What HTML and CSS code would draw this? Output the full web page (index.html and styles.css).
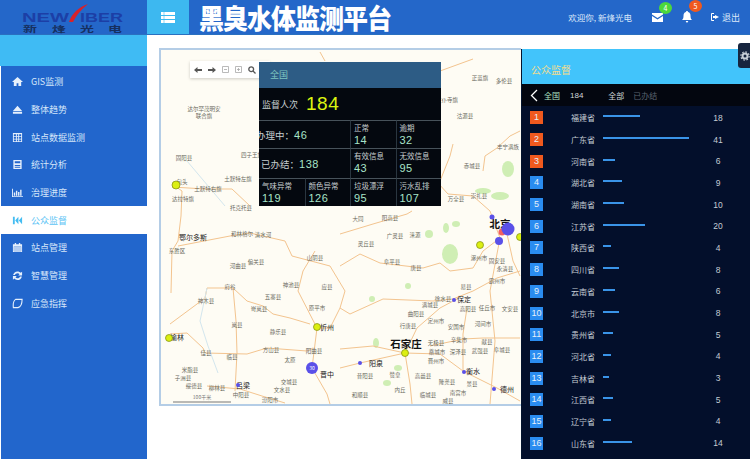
FILE: index.html
```html
<!DOCTYPE html>
<html lang="zh-CN">
<head>
  <meta charset="UTF-8">
  <title>黑臭水体监测平台</title>
  <link rel="stylesheet" href="styles.css">
</head>
<body>

  <header class="topbar">
    <div class="logo">
      <svg width="147" height="34" viewBox="0 0 147 34">
        <text class="logo-en" x="22" y="21.500" textLength="47" lengthAdjust="spacingAndGlyphs">NEW</text>
        <text class="logo-en" x="80" y="21.500" textLength="43" lengthAdjust="spacingAndGlyphs">IBER</text>
        <path d="M69 22 C72 13 79 7 88 4 C82 9 77 14 73 22 Z" fill="#d8222a"/>
        <text class="logo-cn" x="23" y="31.500" textLength="14" lengthAdjust="spacingAndGlyphs">新</text>
        <text class="logo-cn" x="52" y="31.500" textLength="14" lengthAdjust="spacingAndGlyphs">烽</text>
        <text class="logo-cn" x="80" y="31.500" textLength="14" lengthAdjust="spacingAndGlyphs">光</text>
        <text class="logo-cn" x="108" y="31.500" textLength="14" lengthAdjust="spacingAndGlyphs">电</text>
      </svg>
    </div>
    <div class="toggle">
      <svg width="14" height="11" viewBox="0 0 14 11"><path d="M0 0h14v3H0zM0 4h14v3H0zM0 8h14v3H0z" fill="#fff"/><path d="M3 0v11" stroke="#3db8f0" stroke-width=".6"/></svg>
    </div>
    <div class="site-title">黑臭水体监测平台</div>
    <div class="top-right">
      <span class="welcome">欢迎你, 新烽光电</span>
      <span class="top-icon">
        <svg width="11" height="9" viewBox="0 0 11 9"><path d="M0 0h11v1.500L5.500 5 0 1.500zM0 3l5.500 3.500L11 3v6H0z" fill="#fff"/></svg>
        <i class="badge badge-green">4</i>
      </span>
      <span class="top-icon">
        <svg width="10" height="12" viewBox="0 0 10 12"><path d="M5 0c.6 0 1 .4 1 1 2 .5 2.500 2 2.500 4 0 2 .5 3 1.500 4H0c1-1 1.500-2 1.500-4 0-2 .5-3.500 2.500-4 0-.6.4-1 1-1zM3.800 10h2.400c0 .8-.5 1.500-1.200 1.500S3.800 10.800 3.800 10z" fill="#fff"/></svg>
        <i class="badge badge-orange">5</i>
      </span>
      <span class="logout">
        <svg width="8" height="8" viewBox="0 0 8 8"><path d="M3 0H1a1 1 0 0 0-1 1v6a1 1 0 0 0 1 1h2V7H1V1h2zM4 2v1H2v2h2v1l4-2z" fill="#fff"/></svg>
        退出
      </span>
    </div>
  </header>

  <div class="layout">
    <aside class="sidebar">
      <div class="side-top"></div>
      <ul class="menu">
        <li><svg class="ico" viewBox="0 0 12 12"><path d="M6 1 0 6.500h2V11h3V8h2v3h3V6.500h2z"/></svg>GIS监测</li>
        <li><svg class="ico" viewBox="0 0 12 12"><path d="M6 2 11 7.500H1zM1 8.500h10V10.500H1z"/></svg>整体趋势</li>
        <li><svg class="ico" viewBox="0 0 12 12"><path d="M1 1h10v10H1zM2 2.500V4.500h2.300v-2zm3.300 0V4.500h1.500v-2zm2.500 0V4.500H10v-2zM2 5.500V7.300h2.300V5.500zm3.300 0V7.300h1.500V5.500zm2.500 0V7.300H10V5.500zM2 8.300V10h2.300V8.300zm3.300 0V10h1.500V8.300zm2.500 0V10H10V8.300z"/></svg>站点数据监测</li>
        <li><svg class="ico" viewBox="0 0 12 12"><path d="M1.500 1h9v10h-9zM3 2.500v2h6v-2zm0 4V7.500h6V6.500zm0 2V9.500h6V8.500z" fill-rule="evenodd"/></svg>统计分析</li>
        <li><svg class="ico" viewBox="0 0 12 12"><path d="M0 2h1v8h11v1H0zM2 6h1.500v3.500H2zM4.300 4h1.500v5.500H4.300zM6.600 5.500h1.500v4H6.600zM8.900 3h1.500v6.500H8.900z"/></svg>治理进度</li>
        <li class="active"><svg class="ico" viewBox="0 0 12 12"><path d="M1 2h2v8H1zM3.500 6 7 2v8zM7.500 6 11 2v8z"/></svg>公众监督</li>
        <li><svg class="ico" viewBox="0 0 12 12"><path d="M3 1h1.500v1.500h3V1H9v1.500h2V11H1V2.500h2zM2 5v5h8V5z" fill-rule="evenodd"/><path d="M2 5h8v5H2z" opacity=".75"/></svg>站点管理</li>
        <li><svg class="ico" viewBox="0 0 12 12"><path d="M6 1.500c1.500 0 2.700.6 3.500 1.600L11 1.800V6H6.800l1.400-1.500C7.700 3.800 7 3.500 6 3.500 4.700 3.500 3.600 4.300 3.200 5.500H1.200C1.700 3.200 3.700 1.500 6 1.500zM1 6.500h4.200L3.800 8c.5.600 1.200 1 2.200 1 1.300 0 2.400-.8 2.800-2h2c-.5 2.300-2.500 4-4.800 4-1.500 0-2.700-.6-3.500-1.600L1 10.700z"/></svg>智慧管理</li>
        <li><svg class="ico ico-line" viewBox="0 0 12 12"><path d="M4 1.500h7c0 4-1 8-4.500 9H1.500C1 6.500 1.500 3 4 1.500z"/></svg>应急指挥</li>
      </ul>
    </aside>

    <main class="content">
      <section class="map">
        <svg class="map-canvas" viewBox="161 49 360 354" width="360" height="354">
          <g class="green">
            <ellipse cx="450" cy="253" rx="8" ry="10"/><ellipse cx="429" cy="233" rx="4" ry="4"/>
            <ellipse cx="446" cy="227" rx="3" ry="5"/><ellipse cx="456" cy="223" rx="4" ry="3"/>
            <ellipse cx="508" cy="168" rx="6" ry="8"/><ellipse cx="483" cy="190" rx="8" ry="3"/>
            <ellipse cx="500" cy="195" rx="9" ry="4"/><ellipse cx="376" cy="342" rx="3" ry="5"/>
            <ellipse cx="398" cy="367" rx="4" ry="3"/><ellipse cx="387" cy="382" rx="4" ry="3"/>
            <ellipse cx="372" cy="298" rx="3" ry="3"/><ellipse cx="408" cy="285" rx="3" ry="3"/>
          </g>
          <g class="roads">
            <path d="M172 183 182 190 181 215 178 240 172 250 171 292"/>
            <path d="M172 186 205 188 232 188 250 205"/>
            <path d="M178 245 230 235 250 232 285 240 292 255 330 265"/>
            <path d="M170 323 197 303 205 297 207 287 233 287 247 300 263 305 273 313 290 317 310 323"/>
            <path d="M170 333 187 332 203 347 205 352 247 353 267 347 307 350 313 347"/>
            <path d="M317 327 312 367 327 393 330 403"/>
            <path d="M233 287 236 320 237 352 235 390"/>
            <path d="M207 385 240 388 262 395 285 402"/>
            <path d="M315 250 303 270 298 290 317 327"/>
            <path d="M340 233 373 223 407 213 412 210"/>
            <path d="M340 265 360 253 380 262 423 267 440 262 450 270 473 267 483 250 500 237"/>
            <path d="M507 233 513 260 520 275"/>
            <path d="M340 307 350 313 383 298 433 300 453 298 473 290 497 277 520 270"/>
            <path d="M340 348 373 345 405 352 440 353 463 370 497 387 520 400"/>
            <path d="M405 352 417 327 440 307 457 298"/>
            <path d="M405 352 410 383 412 403"/>
            <path d="M405 352 360 362 340 367"/>
            <path d="M463 370 463 333 467 307"/>
            <path d="M520 337 483 337 463 338 430 345"/>
            <path d="M330 265 345 290 340 307 330 327 317 327"/>
            <path d="M440 70 473 58"/><path d="M453 143 450 155 440 180"/>
            <path d="M438 182 448 193 473 195 490 210 500 237"/>
            <path d="M520 130 510 135 497 147 485 155 483 170"/>
            <path d="M320 51 325 60"/>
            <path d="M500 237 490 290 495 340 490 403"/>
          </g>
          <path class="river" d="M207 287 200 320 208 345 218 372"/>
          <path class="river" d="M187 160 225 205"/>
          <g class="place">
            <text x="204" y="110">达尔罕茂明安</text><text x="204" y="117">联合旗</text>
            <text x="184" y="159">固阳县</text><text x="182" y="183">包头</text>
            <text x="208" y="190">土默特右旗</text><text x="238" y="180">土默特左旗</text>
            <text x="183" y="200">达拉特旗</text><text x="241" y="209">托克托县</text>
            <text x="242" y="235">和林格尔</text><text x="177" y="252">东胜区</text>
            <text x="238" y="267">河曲县</text><text x="256" y="263">偏关县</text>
            <text x="263" y="236">清水河</text><text x="206" y="302">神木县</text>
            <text x="230" y="288">府谷</text><text x="291" y="286">神池县</text>
            <text x="273" y="298">五寨县</text><text x="259" y="310">岢岚县</text>
            <text x="278" y="333">静乐县</text><text x="237" y="326">岚县</text>
            <text x="271" y="351">方山县</text><text x="290" y="361">太原</text>
            <text x="289" y="383">交城县</text><text x="282" y="391">文水县</text>
            <text x="314" y="352">阳曲县</text><text x="317" y="309">原平市</text>
            <text x="315" y="259">山阴县</text><text x="327" y="288">应县</text>
            <text x="190" y="371">米脂县</text><text x="183" y="379">子洲县</text>
            <text x="194" y="387">绥德县</text><text x="206" y="354">佳县</text>
            <text x="232" y="358">临县</text><text x="217" y="389">柳林县</text>
            <text x="241" y="396">中阳县</text><text x="270" y="401">汾阳市</text>
            <text x="252" y="156">四子王旗</text>
            <text x="480" y="79">正蓝旗</text><text x="504" y="82">多伦县</text>
            <text x="447" y="101">太仆寺旗</text><text x="465" y="117">沽源县</text>
            <text x="508" y="148">丰宁满族</text><text x="472" y="167">赤城县</text>
            <text x="456" y="200">万全县</text><text x="479" y="197">崇礼县</text>
            <text x="390" y="219">阳高县</text><text x="358" y="220">大同</text>
            <text x="395" y="237">广灵县</text><text x="415" y="236">涞源</text>
            <text x="366" y="245">灵丘县</text><text x="392" y="263">阜平县</text>
            <text x="416" y="269">唐县</text><text x="479" y="259">涿州市</text>
            <text x="497" y="262">固安县</text><text x="505" y="270">永清县</text>
            <text x="466" y="288">易县</text><text x="497" y="282">霸州市</text>
            <text x="443" y="300">徐水县</text><text x="430" y="306">满城县</text>
            <text x="468" y="310">高阳县</text><text x="487" y="309">任丘市</text>
            <text x="510" y="310">文安县</text><text x="416" y="315">曲阳县</text>
            <text x="436" y="322">定州市</text><text x="408" y="327">行唐县</text>
            <text x="456" y="328">安国市</text><text x="483" y="325">河间市</text>
            <text x="459" y="341">辛集市</text><text x="436" y="344">无极县</text>
            <text x="487" y="343">献县</text><text x="437" y="353">藁城市</text>
            <text x="458" y="353">深泽县</text><text x="436" y="362">晋州市</text>
            <text x="480" y="352">武强县</text><text x="502" y="351">阜城县</text>
            <text x="395" y="376">赞皇</text><text x="423" y="377">高邑县</text>
            <text x="447" y="383">隆尧县</text>
            <text x="472" y="385">景县</text><text x="400" y="391">内丘</text>
            <text x="428" y="396">临城县</text><text x="458" y="394">南宫市</text>
            <text x="365" y="377">昔阳县</text><text x="360" y="396">和顺县</text>
            <text x="448" y="402">威县</text>
          </g>
          <g class="place place-bold">
            <text x="193" y="239">鄂尔多斯</text><text x="177" y="339">榆林</text>
            <text x="327" y="329">忻州</text><text x="327" y="376">晋中</text>
            <text x="243" y="387">吕梁</text><text x="376" y="365">阳泉</text>
            <text x="464" y="301">保定</text><text x="473" y="373">衡水</text>
            <text x="507" y="391">德州</text>
          </g>
          <g class="place place-city">
            <text x="500" y="227">北京</text>
            <text x="406" y="347">石家庄</text>
          </g>
          <g class="mark-yellow">
            <circle cx="176" cy="184" r="4"/><circle cx="317" cy="326" r="3.500"/>
            <circle cx="169" cy="337" r="3.500"/><circle cx="480" cy="244" r="3.500"/>
            <circle cx="520" cy="236" r="3.500"/><circle cx="405" cy="352" r="3.500"/>
          </g>
          <circle class="mark-red" cx="502" cy="231" r="3.500"/>
          <g class="mark-blue">
            <circle cx="508" cy="228" r="6.500"/><circle cx="499" cy="240" r="4"/>
            <circle cx="492" cy="216" r="2.500"/><circle cx="454" cy="299" r="2"/>
            <circle cx="360" cy="362" r="2"/><circle cx="464" cy="371" r="2"/>
            <circle cx="494" cy="388" r="2"/><circle cx="312" cy="367" r="6"/>
            <circle cx="238" cy="384" r="2"/>
          </g>
          <text class="mark-num" x="312" y="369">30</text>
          <path class="scale" d="M173 401H231"/>
          <text class="scale-text" x="202" y="398">100千米</text>
        </svg>

        <div class="map-tools">
          <svg width="8" height="6" viewBox="0 0 8 6"><path d="M0 3 3.500 0v2H8v2H3.500v2z"/></svg>
          <svg width="8" height="6" viewBox="0 0 8 6"><path d="M8 3 4.500 0v2H0v2h4.500v2z"/></svg>
          <svg class="tool-box" width="7" height="7" viewBox="0 0 7 7"><path d="M.5.500h6v6h-6zM2 3.500h3"/></svg>
          <svg class="tool-box" width="7" height="7" viewBox="0 0 7 7"><path d="M.5.500h6v6h-6zM2 3.500h3M3.500 2v3"/></svg>
          <svg class="tool-search" width="8" height="8" viewBox="0 0 8 8"><circle cx="3.200" cy="3.200" r="2.400"/><path d="M5 5 7.500 7.500"/></svg>
        </div>

        <div class="stats">
          <div class="stats-head">全国</div>
          <div class="stats-total"><span>监督人次</span><b>184</b></div>
          <div class="stats-grid">
            <div class="cell cell-wide"><span class="inline-label first">办理中：</span><em>46</em></div>
            <div class="cell"><label>正常</label><em>14</em></div>
            <div class="cell"><label>逾期</label><em>32</em></div>
            <div class="cell cell-wide"><span class="inline-label">已办结：</span><em>138</em></div>
            <div class="cell"><label>有效信息</label><em>43</em></div>
            <div class="cell"><label>无效信息</label><em>95</em></div>
            <div class="cell"><label>气味异常</label><em>119</em></div>
            <div class="cell"><label>颜色异常</label><em>126</em></div>
            <div class="cell"><label>垃圾漂浮</label><em>95</em></div>
            <div class="cell"><label>污水乱排</label><em>107</em></div>
          </div>
        </div>
      </section>

      <section class="panel">
        <div class="panel-head">公众监督</div>
        <div class="panel-nav">
          <svg width="8" height="13" viewBox="0 0 8 13"><path d="M7 1 1.500 6.500 7 12" fill="none" stroke="#fff" stroke-width="1.300"/></svg>
          <span class="nav-area">全国</span>
          <span class="nav-count">184</span>
          <span class="nav-all">全部</span>
          <span class="nav-done">已办结</span>
        </div>
        <ul class="rank">
          <li><i class="no hot">1</i><span class="name">福建省</span><span class="bar-wrap"><span class="bar" style="width:37px"></span></span><span class="num">18</span></li>
          <li><i class="no hot">2</i><span class="name">广东省</span><span class="bar-wrap"><span class="bar" style="width:86px"></span></span><span class="num">41</span></li>
          <li><i class="no hot">3</i><span class="name">河南省</span><span class="bar-wrap"><span class="bar" style="width:12px"></span></span><span class="num">6</span></li>
          <li><i class="no">4</i><span class="name">湖北省</span><span class="bar-wrap"><span class="bar" style="width:19px"></span></span><span class="num">9</span></li>
          <li><i class="no">5</i><span class="name">湖南省</span><span class="bar-wrap"><span class="bar" style="width:21px"></span></span><span class="num">10</span></li>
          <li><i class="no">6</i><span class="name">江苏省</span><span class="bar-wrap"><span class="bar" style="width:42px"></span></span><span class="num">20</span></li>
          <li><i class="no">7</i><span class="name">陕西省</span><span class="bar-wrap"><span class="bar" style="width:8px"></span></span><span class="num">4</span></li>
          <li><i class="no">8</i><span class="name">四川省</span><span class="bar-wrap"><span class="bar" style="width:16px"></span></span><span class="num">8</span></li>
          <li><i class="no">9</i><span class="name">云南省</span><span class="bar-wrap"><span class="bar" style="width:12px"></span></span><span class="num">6</span></li>
          <li><i class="no">10</i><span class="name">北京市</span><span class="bar-wrap"><span class="bar" style="width:16px"></span></span><span class="num">8</span></li>
          <li><i class="no">11</i><span class="name">贵州省</span><span class="bar-wrap"><span class="bar" style="width:10px"></span></span><span class="num">5</span></li>
          <li><i class="no">12</i><span class="name">河北省</span><span class="bar-wrap"><span class="bar" style="width:8px"></span></span><span class="num">4</span></li>
          <li><i class="no">13</i><span class="name">吉林省</span><span class="bar-wrap"><span class="bar" style="width:6px"></span></span><span class="num">3</span></li>
          <li><i class="no">14</i><span class="name">江西省</span><span class="bar-wrap"><span class="bar" style="width:10px"></span></span><span class="num">5</span></li>
          <li><i class="no">15</i><span class="name">辽宁省</span><span class="bar-wrap"><span class="bar" style="width:8px"></span></span><span class="num">4</span></li>
          <li><i class="no">16</i><span class="name">山东省</span><span class="bar-wrap"><span class="bar" style="width:29px"></span></span><span class="num">14</span></li>
        </ul>
      </section>

      <div class="gear">
        <svg width="12" height="12" viewBox="0 0 12 12"><circle cx="6" cy="6" r="3" fill="none" stroke="#c8d0d8" stroke-width="2.400"/><circle cx="6" cy="6" r="5" fill="none" stroke="#c8d0d8" stroke-width="1.400" stroke-dasharray="2 1.900"/></svg>
      </div>
    </main>
  </div>

</body>
</html>
```

FILE: styles.css
```css
* {
  box-sizing: border-box;
}

html,
body {
  height: 100%;
}

body {
  margin: 0;
  overflow: hidden;
  background-color: #fff;
  font-family: "Noto Sans CJK SC", "Liberation Sans", sans-serif;
  font-size: 9px;
}

ul {
  list-style: none;
  margin: 0;
  padding: 0;
}

/* top bar */
.topbar {
  display: flex;
  align-items: stretch;
  height: 35px;
  background-color: #2467c9;
  border-bottom: 1px solid #2a70c0;
}

.logo {
  width: 147px;
  flex: none;
}

.logo svg {
  display: block;
}

.logo-en {
  font-family: "Liberation Sans", sans-serif;
  font-size: 12px;
  font-weight: bold;
  fill: #1c3fa6;
}

.logo-cn {
  font-size: 8.500px;
  font-weight: bold;
  fill: #16305f;
}

.toggle {
  display: flex;
  align-items: center;
  justify-content: center;
  width: 42px;
  flex: none;
  background-color: #3db8f0;
}

.site-title {
  height: 34px;
  margin-left: 10px;
  color: #fff;
  font-size: 25px;
  line-height: 34px;
  font-weight: 900;
  letter-spacing: -1px;
  transform: scaleY(1.08);
}

.top-right {
  display: flex;
  align-items: center;
  margin-left: auto;
  padding-right: 10px;
  color: #dbe8fa;
}

.welcome {
  margin-right: 20px;
  font-size: 8.500px;
}

.top-icon {
  position: relative;
  display: flex;
  margin-right: 19px;
}

.badge {
  position: absolute;
  top: -11px;
  left: 7px;
  width: 13px;
  height: 12px;
  border-radius: 50%;
  color: #fff;
  font-size: 7px;
  font-style: normal;
  line-height: 12px;
  text-align: center;
}

.badge-green {
  background-color: #4cd83c;
}

.badge-orange {
  background-color: #f0591e;
}

.logout {
  display: flex;
  align-items: center;
  gap: 3px;
}

/* sidebar */
.layout {
  display: flex;
  height: 424px;
}

.sidebar {
  width: 147px;
  flex: none;
}

.side-top {
  height: 31px;
  background-color: #3fbbf4;
}

.menu {
  height: 393px;
  margin-left: 1px;
  padding-top: 2px;
  background-color: #2266cc;
}

.menu li {
  display: flex;
  align-items: center;
  height: 27.700px;
  padding-left: 11px;
  color: #d6e6fa;
  font-size: 9px;
}

.menu li.active {
  background-color: #fff;
  color: #5cc4f5;
}

.ico {
  width: 11px;
  height: 11px;
  margin-right: 8px;
  flex: none;
  fill: #e6f0fc;
}

.active .ico {
  fill: #45bdf2;
}

.ico-line {
  fill: none;
  stroke: #e6f0fc;
  stroke-width: 1.200;
}

/* main */
.content {
  position: relative;
  display: flex;
  align-items: flex-start;
  flex: 1;
  padding: 13px 0 0 12px;
}

.map {
  position: relative;
  width: 362px;
  height: 358px;
  flex: none;
  overflow: hidden;
  background-color: #fefcf4;
  border: 2px solid #b4cde6;
  border-right: 0;
}

.map-canvas {
  display: block;
}

.green ellipse {
  fill: #cfeeb4;
}

.roads path {
  fill: none;
  stroke: #f3c48f;
  stroke-width: 1;
}

.river {
  fill: none;
  stroke: #d3e6ee;
  stroke-width: 1;
}

.place text {
  fill: #6a6a60;
  font-size: 5.500px;
  text-anchor: middle;
}

.place-bold text {
  fill: #222;
  font-size: 7px;
}

.place-city text {
  fill: #111;
  font-size: 10.500px;
  font-weight: bold;
}

.mark-yellow circle {
  fill: #dcef12;
  stroke: #7c8a10;
  stroke-width: 0.700;
}

.mark-red {
  fill: #f26060;
}

.mark-blue circle {
  fill: #5a50e8;
}

.mark-num {
  fill: #fff;
  font-size: 5px;
  text-anchor: middle;
}

.scale {
  stroke: #777;
  stroke-width: 1;
}

.scale-text {
  fill: #777;
  font-size: 5px;
  text-anchor: middle;
}

.map-tools {
  position: absolute;
  top: 11px;
  left: 29px;
  display: flex;
  align-items: center;
  gap: 6px;
  width: 80px;
  height: 17px;
  padding-left: 4px;
  background-color: #fff;
  box-shadow: 0 1px 3px rgba(0, 0, 0, 0.2);
}

.map-tools svg {
  fill: #555;
}

.map-tools .tool-box {
  fill: none;
  stroke: #a8a8a8;
  stroke-width: 0.800;
}

.map-tools .tool-search {
  fill: none;
  stroke: #555;
  stroke-width: 1.300;
}

/* popup over the map */
.stats {
  position: absolute;
  top: 12px;
  left: 98px;
  width: 182px;
  height: 144px;
  background-color: #04080f;
  color: #c6ced0;
}

.stats-head {
  height: 26px;
  padding-left: 11px;
  background-color: #2d5c85;
  color: #7fc6c0;
  font-size: 9px;
  line-height: 26px;
}

.stats-total {
  display: flex;
  align-items: center;
  height: 32px;
  padding-left: 3px;
}

.stats-total b {
  margin-left: 8px;
  color: #dcf50f;
  font-family: "Liberation Sans", sans-serif;
  font-size: 19px;
  font-weight: normal;
  letter-spacing: 0.500px;
}

.stats-grid {
  display: grid;
  grid-template-columns: repeat(4, 1fr);
  grid-template-rows: 28px 30px 28px;
}

.cell {
  overflow: hidden;
  padding: 1px 0 0 3px;
  border-top: 1px solid #47525a;
  border-left: 1px solid #2a3640;
  white-space: nowrap;
}

.cell:first-child,
.cell:nth-child(4),
.cell:nth-child(7) {
  border-left: 0;
}

.cell-wide {
  display: flex;
  align-items: center;
  grid-column: span 2;
  padding: 0 0 0 2px;
}

.cell label {
  display: block;
  font-size: 7.500px;
  line-height: 11px;
}

.cell em {
  display: block;
  color: #a8e4c8;
  font-family: "Liberation Sans", sans-serif;
  font-size: 11px;
  font-style: normal;
  letter-spacing: 0.500px;
  line-height: 14px;
}

.inline-label {
  margin-right: 0;
  font-size: 9.500px;
}

.inline-label.first {
  margin-left: -5px;
}

/* right panel */
.panel {
  flex: 1;
  height: 411px;
  margin-top: 1px;
  overflow: hidden;
  background-color: #030f2b;
  border-left: 1px solid #04142e;
}

.panel-head {
  height: 35px;
  padding-left: 9px;
  background-color: #42c4fb;
  color: #f3dc8e;
  font-size: 10px;
  line-height: 41px;
}

.panel-nav {
  display: flex;
  align-items: center;
  height: 22px;
  padding-left: 8px;
  background-color: #03060f;
  color: #d0d6da;
}

.nav-area {
  margin-left: 6px;
  color: #b0e6c4;
  font-size: 8px;
}

.nav-count {
  margin-left: 10px;
  font-family: "Liberation Sans", sans-serif;
  font-size: 8px;
}

.nav-all {
  margin-left: 25px;
  font-size: 8px;
}

.nav-done {
  margin-left: 9px;
  color: #5a6470;
  font-size: 8px;
}

.rank {
  padding: 1px 0 0 8px;
}

.rank li {
  display: flex;
  align-items: center;
  height: 21.700px;
}

.no {
  width: 13px;
  height: 13px;
  flex: none;
  background-color: #2a8cf0;
  color: #e6f0fa;
  font-family: "Liberation Sans", sans-serif;
  font-size: 9px;
  font-style: normal;
  line-height: 13px;
  text-align: center;
}

.no.hot {
  background-color: #f0591e;
}

.name {
  width: 32px;
  margin-left: 28px;
  flex: none;
  color: #c4ccd4;
  font-size: 8px;
}

.bar-wrap {
  display: block;
  width: 100px;
  height: 5px;
  flex: none;
}

.bar {
  display: block;
  height: 2px;
  background-color: #3a94e8;
}

.num {
  width: 30px;
  color: #c4ccd4;
  font-family: "Liberation Sans", sans-serif;
  font-size: 8.500px;
  text-align: center;
}

.gear {
  position: absolute;
  top: 8px;
  right: 0;
  display: flex;
  align-items: center;
  width: 12px;
  height: 25px;
  padding-left: 2px;
  overflow: hidden;
  background-color: #17263f;
  border-radius: 3px 0 0 3px;
}
```
